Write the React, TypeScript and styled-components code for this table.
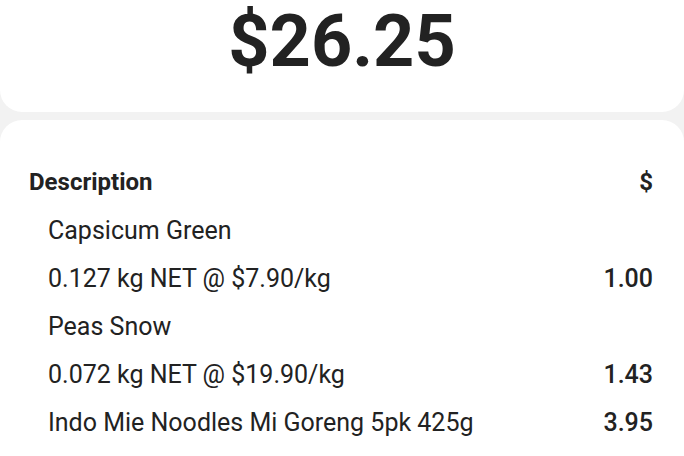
import React from "react";
import styled, { createGlobalStyle } from "styled-components";

const Global = createGlobalStyle`
  html, body { margin: 0; padding: 0; background: #f2f2f2; }
  body { font-family: Roboto, "Noto Sans", sans-serif; color: #222; }
`;

const Page = styled.div`
  width: 684px;
  height: 456px;
  overflow: hidden;
  display: flex;
  flex-direction: column;
  gap: 8px;
  background: #f2f2f2;
`;

const TotalCard = styled.div`
  height: 112px;
  flex: none;
  background: #fff;
  border-radius: 0 0 22px 22px;
  display: flex;
  justify-content: center;
  align-items: flex-start;
  padding-top: 2px;
  box-sizing: border-box;
`;

const Total = styled.div`
  font-size: 72px;
  font-weight: 700;
  line-height: 80px;
  color: #222;
`;

const ItemsCard = styled.div`
  flex: 1;
  background: #fff;
  border-radius: 22px 22px 0 0;
  padding: 38px 30px 0 29px;
  display: flex;
  flex-direction: column;
`;

const Row = styled.div<{ $head?: boolean }>`
  height: 48px;
  flex: none;
  display: flex;
  justify-content: space-between;
  align-items: center;
  padding-left: ${(p) => (p.$head ? "0" : "19px")};
  font-size: ${(p) => (p.$head ? "24px" : "25px")};
  font-weight: ${(p) => (p.$head ? 700 : 400)};
  color: #222;
`;

const Desc = styled.span``;
const Amt = styled.span<{ $head?: boolean }>`
  font-weight: ${(p) => (p.$head ? 700 : 500)};
  padding-right: 1px;
`;

const rows: { d: string; a?: string }[] = [
  { d: "Capsicum Green" },
  { d: "0.127 kg NET @ $7.90/kg", a: "1.00" },
  { d: "Peas Snow" },
  { d: "0.072 kg NET @ $19.90/kg", a: "1.43" },
  { d: "Indo Mie Noodles Mi Goreng 5pk 425g", a: "3.95" },
];

export default function App() {
  return (
    <Page>
      <Global />
      <TotalCard>
        <Total>$26.25</Total>
      </TotalCard>
      <ItemsCard>
        <Row $head>
          <Desc>Description</Desc>
          <Amt $head>$</Amt>
        </Row>
        {rows.map((r, i) => (
          <Row key={i}>
            <Desc>{r.d}</Desc>
            {r.a && <Amt>{r.a}</Amt>}
          </Row>
        ))}
      </ItemsCard>
    </Page>
  );
}
